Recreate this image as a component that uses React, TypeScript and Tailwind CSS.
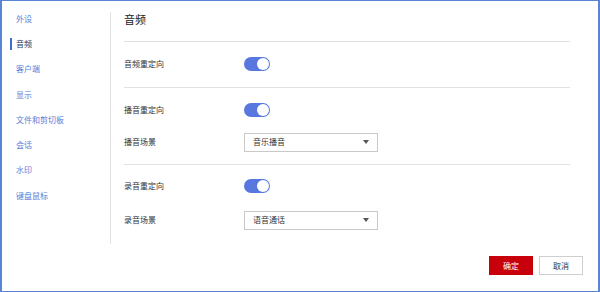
import React from "react";

const navItems = ["外设", "音频", "客户端", "显示", "文件和剪切板", "会话", "水印", "键盘鼠标"];

function Toggle() {
  return (
    <div className="w-[26px] h-[14px] rounded-full bg-[#5878df] flex items-center justify-end pr-[1px]">
      <div className="w-[12px] h-[12px] rounded-full bg-white" />
    </div>
  );
}

function Select({ value }: { value: string }) {
  return (
    <div className="w-[134px] h-[19px] border border-[#c9c9c9] flex items-center justify-between pl-[8px] pr-[8px] text-[8px] text-[#333]">
      <span>{value}</span>
      <svg width="6" height="4" viewBox="0 0 6 4">
        <polygon points="0,0 6,0 3,4" fill="#555" />
      </svg>
    </div>
  );
}

function Row({ label, children }: { label: string; children: React.ReactNode }) {
  return (
    <div className="h-[20px] flex items-center">
      <div className="w-[120px] text-[8px] text-[#333]">{label}</div>
      {children}
    </div>
  );
}

export default function App() {
  return (
    <div
      className="w-[600px] h-[292px] bg-white border-t border-b border-l-2 border-r-2 border-[#5a84d4] flex flex-col"
      style={{ fontFamily: '"Noto Sans CJK SC", "Noto Sans", sans-serif' }}
    >
      <div className="h-[248px] flex">
        <div className="w-[108px] pt-[5px] flex flex-col">
          {navItems.map((item) => {
            const active = item === "音频";
            return (
              <div key={item} className="h-[25.3px] flex items-center pl-[8px]">
                <div className={`w-[2px] h-[12px] ${active ? "bg-[#3c6dd8]" : "bg-transparent"}`} />
                <span className={`ml-[4px] text-[8px] ${active ? "text-[#2a3658]" : "text-[#5a7ed8]"}`}>{item}</span>
              </div>
            );
          })}
        </div>
        <div className="w-px h-[232px] mt-[11px] bg-[#e3e3e3]" />
        <div className="flex-1 pl-[13px] pr-[28px] flex flex-col">
          <div className="pt-[9px] h-[27px] flex items-center text-[11px] text-[#222] leading-[18px]">音频</div>
          <div className="mt-[13px] h-px bg-[#e2e2e2]" />
          <div className="pt-[12px] pb-[13px]">
            <Row label="音频重定向">
              <Toggle />
            </Row>
          </div>
          <div className="h-px bg-[#e2e2e2]" />
          <div className="pt-[12px] pb-[12px] flex flex-col gap-[12px]">
            <Row label="播音重定向">
              <Toggle />
            </Row>
            <Row label="播音场景">
              <Select value="音乐播音" />
            </Row>
          </div>
          <div className="h-px bg-[#e2e2e2]" />
          <div className="pt-[11px] flex flex-col gap-[14px]">
            <Row label="录音重定向">
              <Toggle />
            </Row>
            <Row label="录音场景">
              <Select value="语音通话" />
            </Row>
          </div>
        </div>
      </div>
      <div className="flex justify-end gap-[6px] pt-[7px] pr-[15px]">
        <div className="w-[44px] h-[19px] bg-[#c7000b] text-white text-[8px] flex items-center justify-center">确定</div>
        <div className="w-[44px] h-[19px] border border-[#cfcfcf] text-[#333] text-[8px] flex items-center justify-center">取消</div>
      </div>
    </div>
  );
}
